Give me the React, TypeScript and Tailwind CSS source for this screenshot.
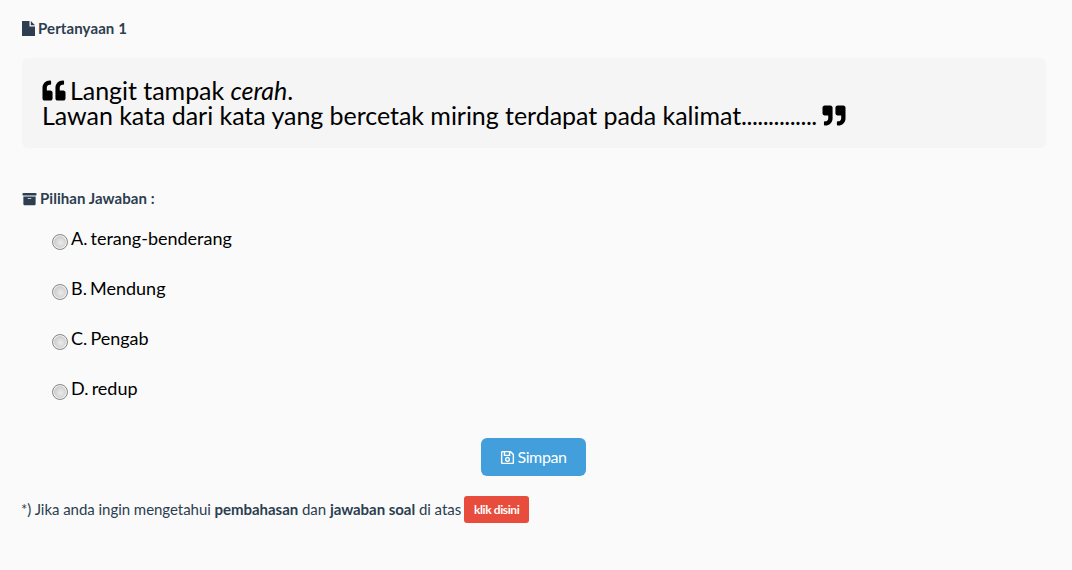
import { FaArchive, FaQuoteLeft, FaQuoteRight, FaRegSave } from 'react-icons/fa';

const options = ['A. terang-benderang', 'B. Mendung', 'C. Pengab', 'D. redup'];

export default function App() {
  return (
    <div className="h-[570px] overflow-hidden bg-[#fafafa] pl-[22px] pr-[26px] pt-[18px] font-['Lato','Noto_Sans',sans-serif] text-[15px] text-[#2c3e50]">
      <div className="flex h-[21px] items-center gap-[3px] font-bold tracking-[0.1px]">
        <svg viewBox="0 0 13 15" className="h-[15px] w-[13px]" fill="currentColor">
          <path d="M0 0h7.5v5.5H13V15H0z" />
          <path d="M8.8 0 13 4.2H8.8z" />
        </svg>
        <span>Pertanyaan 1</span>
      </div>

      <div className="mt-[19px] h-[90px] rounded-md bg-[#f5f5f5] px-5 py-5 text-[25px] leading-[25px] tracking-[-0.04px] text-black">
        <FaQuoteLeft className="-my-2 mr-[4px] inline-block h-[23px] w-[24px] align-[6px]" />
        Langit tampak <em>cerah</em>.
        <br />
        Lawan kata dari kata yang bercetak miring terdapat pada kalimat<span className="tracking-[-0.5px]">..............</span>
        <FaQuoteRight className="-my-2 ml-[5px] inline-block h-[23px] w-[24px] align-[6px]" />
      </div>

      <div className="mt-10 flex h-[21px] items-center gap-[3px] font-bold tracking-[0.05px]">
        <FaArchive className="h-[14px] w-[15px]" />
        <span>Pilihan Jawaban :</span>
      </div>

      <div className="mt-[5px] flex flex-col pl-[30px]">
        {options.map((option) => (
          <label key={option} className="flex h-[50px] items-center gap-[3px] text-[18px] text-black [word-spacing:-1.5px]">
            <input
              type="radio"
              name="jawaban"
              className="mt-[6px] size-4 appearance-none rounded-full border border-[#8a8a8a] bg-[radial-gradient(circle_at_55%_55%,#ececec_0%,#cfcfcf_55%,#a9a9a9_100%)] shadow-[inset_0_0_0_1px_#f4f4f4]"
            />
            <span className="pb-[2px]">{option}</span>
          </label>
        ))}
      </div>

      <div className="mt-[24px] flex justify-center pr-px">
        <button className="flex h-[38px] w-[105px] items-center justify-center gap-[2px] rounded-md bg-[#429fdc] text-[16px] tracking-[-0.4px] text-white">
          <FaRegSave className="size-[15px]" />
          Simpan
        </button>
      </div>

      <p className="-ml-px mt-[20px] flex h-[27px] items-center whitespace-pre tracking-[-0.04px]">
        <span>*) Jika anda ingin mengetahui <b>pembahasan</b> dan <b>jawaban soal</b> di atas</span>
        <a className="ml-[3px] flex h-[27px] w-[65px] items-center justify-center rounded-[3px] bg-[#e74c3c] text-[12px] font-bold tracking-[-0.4px] text-white">
          klik disini
        </a>
      </p>
    </div>
  );
}
